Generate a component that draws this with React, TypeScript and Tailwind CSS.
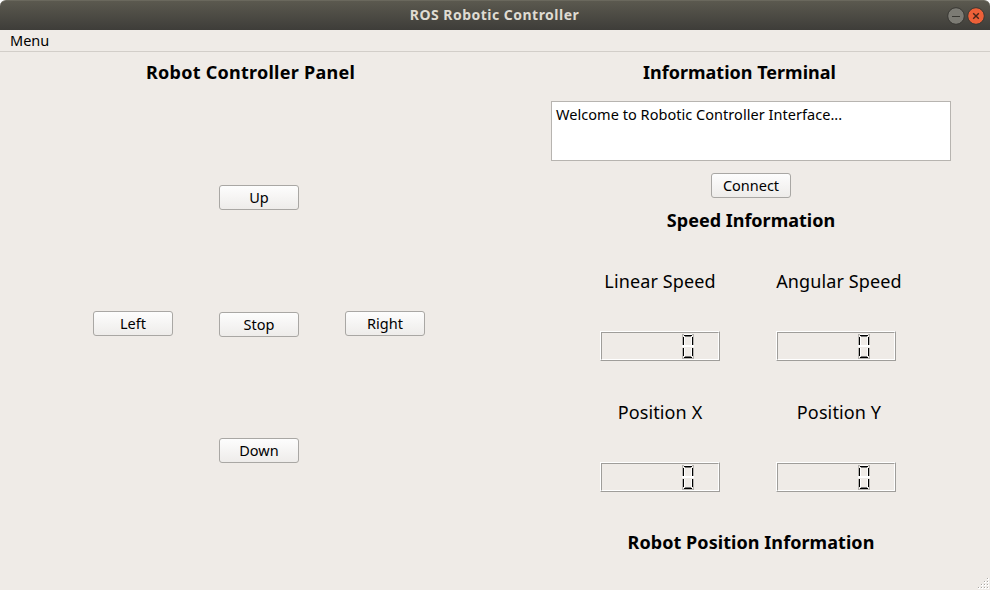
import React from "react";

function PushButton({ label, className = "" }: { label: string; className?: string }) {
  return (
    <button
      className={`h-[25px] w-[80px] rounded-[3px] border border-[#a9a7a4] bg-gradient-to-b from-[#fdfdfd] to-[#eeecea] pt-px pb-px text-center text-[14.5px] leading-[21px] text-black ${className}`}
    >
      {label}
    </button>
  );
}

function Lcd() {
  return (
    <div className="h-[30px] w-[120px] border border-t-white border-l-white border-r-[#9f9d9a] border-b-[#9f9d9a]">
      <div className="flex h-full w-full justify-end border border-t-[#9f9d9a] border-l-[#9f9d9a] border-r-white border-b-white pt-px pr-[24px]">
        <svg width="12" height="25" viewBox="0 0 12 25" shapeRendering="crispEdges">
          <path d="M0 0h2v1H0zM10 0h2v1h-2zM0 1h1v10H0zM11 1h1v10h-1zM0 14h1v10H0zM11 14h1v10h-1zM0 24h12v1H0z" fill="#b4b2af" />
          <path d="M2 0h8v1H2zM2 3h1v8H2zM9 3h1v8H9zM0 11h12v2H0zM2 14h1v8H2zM9 14h1v8H9z" fill="#fff" />
          <path d="M2 1h8v1H2zM1 3h1v8H1zM10 3h1v8h-1zM1 14h1v8H1zM10 14h1v8h-1zM2 23h8v1H2z" fill="#000" />
          <path d="M3 2h6v1H3zM3 22h6v1H3z" fill="#777" />
        </svg>
      </div>
    </div>
  );
}

function Reading({ label, className }: { label: string; className: string }) {
  return (
    <div className="flex flex-col items-center">
      <div className={`h-[26px] text-[18px] leading-[26px] tracking-[0.12px] whitespace-nowrap ${className}`}>{label}</div>
      <div className="mt-[37px]">
        <Lcd />
      </div>
    </div>
  );
}

function SizeGrip() {
  const dots = [[9, 0], [6, 3], [9, 3], [3, 6], [6, 6], [9, 6], [0, 9], [3, 9], [6, 9], [9, 9]];
  return (
    <svg className="absolute right-0 bottom-0" width="12" height="12" viewBox="0 0 12 12" shapeRendering="crispEdges">
      {dots.map(([x, y]) => (
        <g key={`${x}-${y}`}>
          <rect x={x} y={y} width="2" height="2" fill="#fff" />
          <rect x={x} y={y} width="1" height="1" fill="#aaa7a3" />
        </g>
      ))}
    </svg>
  );
}

export default function App() {
  return (
    <div className="relative flex h-[590px] w-[990px] flex-col overflow-hidden bg-white font-['Noto_Sans',sans-serif] text-black">
      <header className="flex h-[30px] shrink-0 items-center rounded-t-[6px] border-t border-[#6a685d] bg-gradient-to-b from-[#5b594f] to-[#3e3d39]">
        <div className="w-[946px] pl-[43px] text-center text-[14px] leading-[28px] font-bold tracking-[0.48px] text-[#dfdbd2]">
          <span className="relative -top-px">ROS Robotic Controller</span>
        </div>
        <svg width="40" height="20" viewBox="0 0 40 20">
          <circle cx="10" cy="10" r="8.3" fill="#7c7b74" stroke="#383733" />
          <path d="M6 10.5h8" stroke="#393833" />
          <circle cx="30" cy="10" r="8.3" fill="#ed6038" stroke="#383733" />
          <path d="M27.2 7.2l5.6 5.6M32.8 7.2l-5.6 5.6" stroke="#45251a" strokeWidth="1.4" />
        </svg>
      </header>

      <nav className="h-[22px] shrink-0 border-b border-[#d2cec9] bg-[#efebe7] pl-[10px] text-[14.5px] leading-[21px]">
        Menu
      </nav>

      <main className="flex flex-1 bg-[#efebe7]">
        <section className="w-[501px]">
          <h1 className="mt-[7px] h-[26px] text-center text-[18px] leading-[26px] font-bold tracking-[0.26px]">Robot Controller Panel</h1>
          <div className="mt-[100px] ml-[93px] grid w-[332px] grid-cols-3 gap-x-[46px]">
            <PushButton label="Up" className="col-start-2" />
            <PushButton label="Left" className="col-start-1 mt-[101px]" />
            <PushButton label="Stop" className="mt-[102px]" />
            <PushButton label="Right" className="mt-[101px]" />
            <PushButton label="Down" className="col-start-2 mt-[101px]" />
          </div>
        </section>

        <section className="ml-[50px] flex w-[400px] flex-col items-center">
          <h2 className="mt-[7px] mr-[23px] h-[26px] text-center text-[18px] leading-[26px] font-bold">Information Terminal</h2>
          <div className="mt-[16px] h-[60px] w-[400px] border border-[#b7b4b0] bg-white pt-[2px] pl-[4px] text-[14.5px] leading-[20px] tracking-[0.04px]">
            Welcome to Robotic Controller Interface...
          </div>
          <PushButton label="Connect" className="mt-[12px]" />
          <h2 className="mt-[9px] h-[26px] text-center text-[18px] leading-[26px] font-bold">Speed Information</h2>
          <div className="mt-[35px] mr-[6px] grid grid-cols-[120px_120px] justify-items-center gap-x-[56px] gap-y-[38px]">
            <Reading label="Linear Speed" className="" />
            <Reading label="Angular Speed" className="ml-[6px]" />
            <Reading label="Position X" className="" />
            <Reading label="Position Y" className="ml-[6px]" />
          </div>
          <h2 className="mt-[37px] h-[26px] text-center text-[18px] leading-[26px] font-bold tracking-[0.06px]">Robot Position Information</h2>
        </section>
      </main>
      <SizeGrip />
    </div>
  );
}
